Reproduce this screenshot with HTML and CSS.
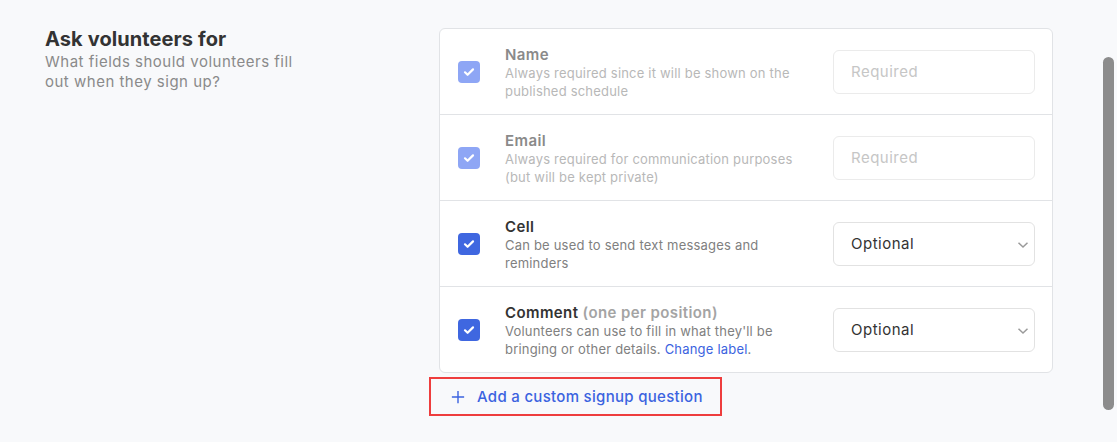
FILE: index.html
```html
<!DOCTYPE html>
<html lang="en">
<head>
    <meta charset="UTF-8">
    <title>Signup fields</title>
    <link rel="stylesheet" href="styles.css">
</head>
<body>
    <div class="section">
        <div class="intro">
            <h2>Ask volunteers for</h2>
            <p>What fields should volunteers fill out when they sign up?</p>
        </div>

        <div class="fields">
            <div class="card">
                <div class="row disabled">
                    <span class="check"><svg viewBox="0 0 22 22"><path d="M7 11.3l2.6 2.5L15 8.4"/></svg></span>
                    <div class="info">
                        <div class="title">Name</div>
                        <div class="desc">Always required since it will be shown on the published schedule</div>
                    </div>
                    <input class="control" type="text" placeholder="Required" disabled>
                </div>
                <div class="row disabled">
                    <span class="check"><svg viewBox="0 0 22 22"><path d="M7 11.3l2.6 2.5L15 8.4"/></svg></span>
                    <div class="info">
                        <div class="title">Email</div>
                        <div class="desc">Always required for communication purposes (but will be kept private)</div>
                    </div>
                    <input class="control" type="text" placeholder="Required" disabled>
                </div>
                <div class="row">
                    <span class="check"><svg viewBox="0 0 22 22"><path d="M7 11.3l2.6 2.5L15 8.4"/></svg></span>
                    <div class="info">
                        <div class="title">Cell</div>
                        <div class="desc">Can be used to send text messages and reminders</div>
                    </div>
                    <div class="select-wrap">
                        <select class="control">
                            <option>Optional</option>
                            <option>Required</option>
                        </select>
                        <svg class="chevron" viewBox="0 0 12 8"><path d="M1.5 1.8L6 6l4.5-4.2"/></svg>
                    </div>
                </div>
                <div class="row">
                    <span class="check"><svg viewBox="0 0 22 22"><path d="M7 11.3l2.6 2.5L15 8.4"/></svg></span>
                    <div class="info">
                        <div class="title">Comment <span class="note">(one per position)</span></div>
                        <div class="desc">Volunteers can use to fill in what they'll be bringing or other details. <a href="#">Change label</a>.</div>
                    </div>
                    <div class="select-wrap">
                        <select class="control">
                            <option>Optional</option>
                            <option>Required</option>
                        </select>
                        <svg class="chevron" viewBox="0 0 12 8"><path d="M1.5 1.8L6 6l4.5-4.2"/></svg>
                    </div>
                </div>
            </div>

            <button class="add-btn">
                <svg viewBox="0 0 16 16"><path d="M8 1v14M1 8h14"/></svg>
                Add a custom signup question
            </button>
        </div>
    </div>

    <div class="scrollbar"></div>
</body>
</html>
```

FILE: styles.css
```css
body {
    margin: 0;
    background: #f8f9fb;
    font-family: Inter, "Open Sans", sans-serif;
    color: #333;
    height: 442px;
    overflow: hidden;
}
.section {
    display: flex;
    padding: 28px 0 0 45px;
}
.intro {
    width: 394px;
}
.intro h2 {
    margin: -1px 0 1px;
    font-size: 20px;
    line-height: 24px;
    font-weight: 700;
    letter-spacing: 0.1px;
    color: #333;
}
.intro p {
    margin: 0;
    width: 262px;
    font-size: 15px;
    line-height: 20px;
    letter-spacing: 0.5px;
    color: #8a8a8a;
}
.fields {
    width: 614px;
}
.card {
    background: #fff;
    border: 1px solid #e1e3e6;
    border-radius: 6px;
}
.row {
    display: flex;
    align-items: center;
    box-sizing: border-box;
    height: 86px;
    padding: 2px 17px 0 18px;
    border-bottom: 1px solid #e1e3e6;
}
.row:last-child {
    height: 85px;
    border-bottom: none;
}
.check {
    width: 22px;
    height: 22px;
    margin-top: -2px;
    border-radius: 4px;
    background: #3f67e0;
    flex-shrink: 0;
}
.check svg {
    display: block;
    width: 22px;
    height: 22px;
    fill: none;
    stroke: #fff;
    stroke-width: 2.2;
    stroke-linecap: round;
    stroke-linejoin: round;
}
.disabled .check {
    background: #8ea6f5;
}
.info {
    flex: 1;
    margin: 0 28px 0 25px;
}
.title {
    font-size: 15px;
    line-height: 19px;
    font-weight: 600;
    letter-spacing: 0.4px;
    color: #333;
}
.note {
    color: #a4a4a4;
}
.desc {
    font-size: 13px;
    line-height: 18px;
    letter-spacing: 0.2px;
    color: #808080;
}
.desc a {
    color: #3b63e0;
    text-decoration: none;
}
.disabled .title {
    color: #8a8a8a;
}
.disabled .desc {
    color: #b8b8b8;
}
.control {
    box-sizing: border-box;
    width: 202px;
    height: 44px;
    margin-top: -2px;
    padding: 0 17px;
    border: 1px solid #e2e2e2;
    border-radius: 6px;
    background: #fff;
    font-family: inherit;
    font-size: 15px;
    letter-spacing: 0.5px;
    color: #333;
    outline: none;
}
input.control::placeholder {
    color: #c6c6c6;
}
input.control:disabled {
    border-color: #ebebeb;
}
.select-wrap {
    position: relative;
}
select.control {
    appearance: none;
    -webkit-appearance: none;
    display: block;
}
.chevron {
    position: absolute;
    right: 6px;
    top: 17px;
    width: 12px;
    height: 8px;
    fill: none;
    stroke: #9a9a9a;
    stroke-width: 1.5;
    pointer-events: none;
}
.add-btn {
    display: flex;
    align-items: center;
    gap: 12px;
    height: 39px;
    margin: 4px 0 0 -10px;
    padding: 0 17px 0 20px;
    background: transparent;
    border: 2px solid #ee3d3d;
    font-family: inherit;
    font-size: 15px;
    font-weight: 500;
    letter-spacing: 0.3px;
    color: #3b63e0;
    cursor: pointer;
}
.add-btn svg {
    width: 14px;
    height: 14px;
    fill: none;
    stroke: #3b63e0;
    stroke-width: 1.6;
}
.scrollbar {
    position: absolute;
    top: 57px;
    right: 3px;
    width: 11px;
    height: 353px;
    border-radius: 6px;
    background: #8c8c8c;
}
```
